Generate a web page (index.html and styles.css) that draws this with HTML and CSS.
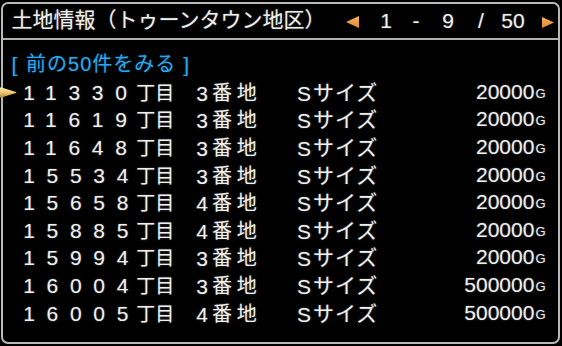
FILE: index.html
```html
<!DOCTYPE html>
<html lang="ja">
<head>
    <meta charset="UTF-8">
    <title>土地情報</title>
    <link rel="stylesheet" href="styles.css">
</head>
<body>

    <div class="window">
        <!-- Title bar -->
        <div class="header">
            <span class="title">土地情報（トゥーンタウン地区）</span>
            <div class="pager">
                <svg class="tri" width="13" height="12" viewBox="0 0 13 12">
                    <defs>
                        <linearGradient id="org" x1="0" y1="0" x2="0" y2="1">
                            <stop offset="0" stop-color="#f6b25c"/>
                            <stop offset="1" stop-color="#e08a30"/>
                        </linearGradient>
                    </defs>
                    <polygon points="13,0 13,12 0,6" fill="url(#org)"/>
                </svg>
                <span class="pn p1">1</span>
                <span class="pn p2">-</span>
                <span class="pn p3">9</span>
                <span class="pn p4">/</span>
                <span class="pn p5">50</span>
                <svg class="tri next" width="12" height="11" viewBox="0 0 12 11">
                    <polygon points="0,0 0,11 12,5.5" fill="url(#org)"/>
                </svg>
            </div>
        </div>

        <!-- Lot list -->
        <div class="list">
            <div class="row link">
                <span class="br">[</span><span class="link-text">前の50件をみる</span><span class="br close">]</span>
            </div>
            <div class="row">
                <svg class="cursor" width="17" height="11" viewBox="0 0 17 11">
                    <defs>
                        <linearGradient id="gold" x1="0" y1="0" x2="0" y2="1">
                            <stop offset="0" stop-color="#fff0b8"/>
                            <stop offset="0.5" stop-color="#f0c870"/>
                            <stop offset="1" stop-color="#b88838"/>
                        </linearGradient>
                    </defs>
                    <path d="M0 1 Q0 0 1.5 0.4 L16 5 Q17 5.5 16 6 L1.5 10.6 Q0 11 0 10 Z" fill="url(#gold)"/>
                </svg>
                <span class="num">11330</span><span class="cho">丁目</span><span class="ban">3<span class="cjk">番地</span></span><span class="size">S<span class="cjk">サイズ</span></span><span class="price">20000<small>G</small></span>
            </div>
            <div class="row">
                <span class="num">11619</span><span class="cho">丁目</span><span class="ban">3<span class="cjk">番地</span></span><span class="size">S<span class="cjk">サイズ</span></span><span class="price">20000<small>G</small></span>
            </div>
            <div class="row">
                <span class="num">11648</span><span class="cho">丁目</span><span class="ban">3<span class="cjk">番地</span></span><span class="size">S<span class="cjk">サイズ</span></span><span class="price">20000<small>G</small></span>
            </div>
            <div class="row">
                <span class="num">15534</span><span class="cho">丁目</span><span class="ban">3<span class="cjk">番地</span></span><span class="size">S<span class="cjk">サイズ</span></span><span class="price">20000<small>G</small></span>
            </div>
            <div class="row">
                <span class="num">15658</span><span class="cho">丁目</span><span class="ban">4<span class="cjk">番地</span></span><span class="size">S<span class="cjk">サイズ</span></span><span class="price">20000<small>G</small></span>
            </div>
            <div class="row">
                <span class="num">15885</span><span class="cho">丁目</span><span class="ban">4<span class="cjk">番地</span></span><span class="size">S<span class="cjk">サイズ</span></span><span class="price">20000<small>G</small></span>
            </div>
            <div class="row">
                <span class="num">15994</span><span class="cho">丁目</span><span class="ban">3<span class="cjk">番地</span></span><span class="size">S<span class="cjk">サイズ</span></span><span class="price">20000<small>G</small></span>
            </div>
            <div class="row">
                <span class="num">16004</span><span class="cho">丁目</span><span class="ban">3<span class="cjk">番地</span></span><span class="size">S<span class="cjk">サイズ</span></span><span class="price">500000<small>G</small></span>
            </div>
            <div class="row">
                <span class="num">16005</span><span class="cho">丁目</span><span class="ban">4<span class="cjk">番地</span></span><span class="size">S<span class="cjk">サイズ</span></span><span class="price">500000<small>G</small></span>
            </div>
        </div>
    </div>

</body>
</html>
```

FILE: styles.css
```css
body {
    margin: 0;
    background-color: #000;
    color: #f0f0f0;
    font-family: "Liberation Sans", "Noto Sans CJK JP", sans-serif;
    text-shadow: 0 0 2px rgba(255, 255, 255, 0.35);
}
.window {
    box-sizing: border-box;
    width: 559px;
    height: 342px;
    margin: 2px 0 0 1px;
    border: 2px solid #b8b8b8;
    border-radius: 7px;
}
.header {
    display: flex;
    align-items: center;
    height: 34px;
    padding: 0 4px 0 8.5px;
    border-bottom: 2px solid #b0b0b0;
}
.title {
    font-family: "Noto Sans CJK JP", sans-serif;
    font-size: 21px;
    line-height: 34px;
    margin-top: -6px;
}
.pager {
    display: flex;
    align-items: center;
    margin-left: auto;
    font-size: 21px;
    line-height: 34px;
}
.pager .tri {
    display: block;
    margin-top: 2px;
}
.pn {
    text-align: center;
}
.p1 { width: 30px; margin-left: 12px; }
.p2 { width: 30px; }
.p3 { width: 34px; }
.p4 { width: 32px; }
.p5 { width: 32px; }
.pager .next {
    margin-left: 13px;
}
.list {
    padding-top: 11.2px;
}
.row {
    position: relative;
    display: flex;
    align-items: center;
    height: 27.6px;
    padding: 0 12.5px 0 20.2px;
    font-size: 21px;
    line-height: 27.6px;
    white-space: nowrap;
}
.cjk, .cho {
    font-family: "Noto Sans CJK JP", sans-serif;
}
.cursor {
    position: absolute;
    left: -3px;
    top: 8.5px;
}
.num {
    width: 113px;
    letter-spacing: 11.7px;
}
.cho {
    width: 60px;
    font-size: 19px;
    margin-bottom: 2px;
}
.ban {
    width: 100.8px;
}
.ban .cjk {
    font-size: 20px;
    letter-spacing: 5px;
    margin-left: 4px;
    vertical-align: 1px;
}
.size .cjk {
    font-size: 21px;
    letter-spacing: 1px;
    margin-left: 2px;
    vertical-align: 1px;
}
.price {
    margin-left: auto;
}
.price small {
    font-size: 13px;
    margin-left: 1px;
    vertical-align: 1px;
}
.link {
    padding-left: 8.5px;
    color: #2aa6ec;
    text-shadow: 0 0 2px rgba(42, 166, 236, 0.4);
}
.link-text {
    margin-left: 8.7px;
    font-size: 20px;
    letter-spacing: 1px;
}
.link .close {
    margin-left: 7px;
}
```
